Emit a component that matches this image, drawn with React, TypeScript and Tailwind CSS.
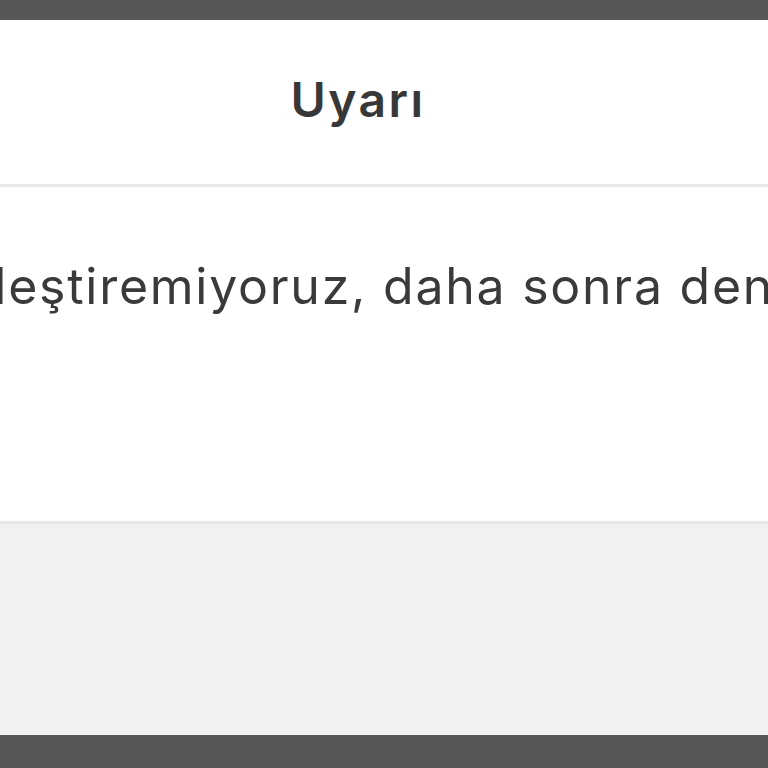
export default function App() {
  return (
    <div className="h-[768px] w-[768px] overflow-hidden bg-[#575757] flex flex-col" style={{ fontFamily: 'Inter, "Noto Sans", sans-serif' }}>
      <div className="h-[20px] shrink-0" />
      <div className="flex flex-col w-[1200px] ml-[-242px] shrink-0 bg-white">
        <div className="h-[167px] flex items-center justify-center pb-[4px] border-b-[3px] border-[#e9e9e9]">
          <h1 className="text-[48px] font-semibold tracking-[0.05em] text-[#383838]">Uyarı</h1>
        </div>
        <div className="h-[337px] flex items-start justify-center pt-[62px] border-b-[3px] border-[#e6e6e6]">
          <p className="text-[50px] tracking-[0.035em] text-[#3a3a3a] whitespace-nowrap">
            gerçekleştiremiyoruz, daha sonra deneyin.
          </p>
        </div>
        <div className="h-[211px] bg-[#f1f1f1]" />
      </div>
    </div>
  )
}
